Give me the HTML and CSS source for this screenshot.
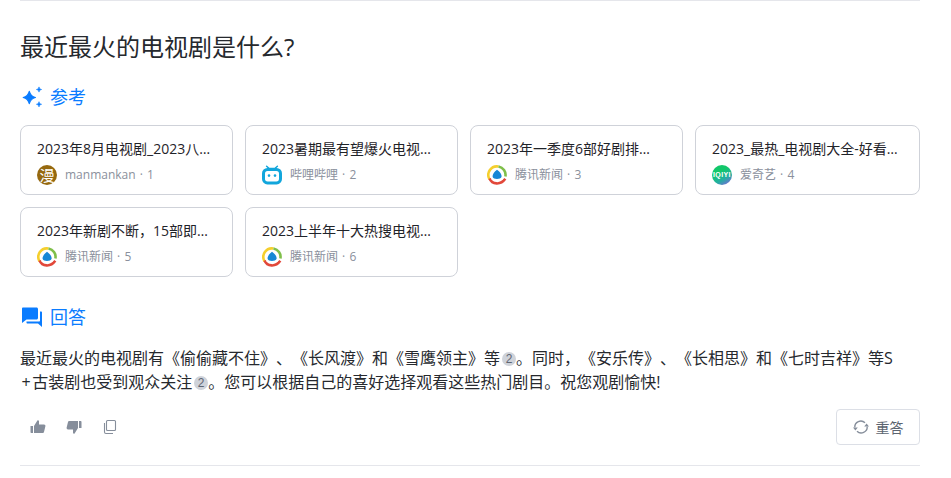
FILE: index.html
```html
<!DOCTYPE html>
<html lang="zh-CN">
<head>
<meta charset="utf-8">
<title>最近最火的电视剧是什么?</title>
<link rel="stylesheet" href="styles.css">
</head>
<body>
<svg class="defs" width="0" height="0" aria-hidden="true">
  <symbol id="tencent" viewBox="0 0 20 20">
    <path d="M2.6 14.4A8.6 8.6 0 0 1 11.5 1.5" fill="none" stroke="#f5cf2e" stroke-width="2.6"/>
    <path d="M11.5 1.5A8.6 8.6 0 0 1 18.4 11.5" fill="none" stroke="#7fbf4a" stroke-width="2.6"/>
    <path d="M2.6 13.5C5 19.5 13.5 20.5 18.3 13.8" fill="none" stroke="#e2483a" stroke-width="2.6"/>
    <path d="M10 4.8C12.7 6.8 15 9.4 14.6 11.8C14.2 13.6 12 14 10 14C8 14 5.8 13.6 5.6 11.8C5.3 9.4 7.4 6.8 10 4.8Z" fill="#1787d6"/>
    <path d="M4.4 14C7.5 15.8 13 15.8 16.2 13.6" fill="none" stroke="#fff" stroke-width="1"/>
  </symbol>
</svg>
<main class="page">
  <h1 class="question">最近最火的电视剧是什么?</h1>

  <h2 class="section-head refs-head">
    <svg class="head-icon" viewBox="0 0 22 22"><path transform="translate(.8 .7)" d="M8.5 4.6C9.4 8.2 10.9 9.7 14.6 10.8C10.9 11.9 9.4 13.4 8.5 17C7.6 13.4 6.1 11.9 2.4 10.8C6.1 9.7 7.6 8.2 8.5 4.6Z" fill="#0a7cff" stroke="#0a7cff" stroke-width="1.2" stroke-linejoin="round"/><path transform="translate(2 .3)" d="M17 .6C17.4 2.2 18 2.8 19.6 3.2C18 3.6 17.4 4.2 17 5.8C16.6 4.2 16 3.6 14.4 3.2C16 2.8 16.6 2.2 17 .6ZM17 15.4C17.4 17 18 17.6 19.6 18C18 18.4 17.4 19 17 20.6C16.6 19 16 18.4 14.4 18C16 17.6 16.6 17 17 15.4Z" fill="#0a7cff" stroke="#0a7cff" stroke-width=".6" stroke-linejoin="round"/></svg>
    <span>参考</span>
  </h2>

  <div class="refs">
    <a class="card">
      <div class="card-title">2023年8月电视剧_2023八月电视剧大全</div>
      <div class="card-meta"><span class="avatar avatar-man">漫</span><span>manmankan · 1</span></div>
    </a>
    <a class="card">
      <div class="card-title">2023暑期最有望爆火电视剧盘点推荐合集</div>
      <div class="card-meta">
        <svg class="avatar" viewBox="0 0 20 20"><path d="M4.6 1.2L7.2 3.6H12.8L15.4 1.2" fill="none" stroke="#12a6dc" stroke-width="1.5" stroke-linecap="round"/><rect x="0" y="3" width="20" height="16.4" rx="5.4" fill="#12a6dc"/><rect x="3" y="6" width="14" height="10.4" rx="2.6" fill="#fff"/><circle cx="7" cy="10.6" r="1.3" fill="#12a6dc"/><circle cx="13" cy="10.6" r="1.3" fill="#12a6dc"/></svg>
        <span>哔哩哔哩 · 2</span>
      </div>
    </a>
    <a class="card">
      <div class="card-title">2023年一季度6部好剧排行榜单新鲜出炉啦</div>
      <div class="card-meta"><svg class="avatar"><use href="#tencent"/></svg><span>腾讯新闻 · 3</span></div>
    </a>
    <a class="card">
      <div class="card-title">2023_最热_电视剧大全-好看的电视剧排行榜</div>
      <div class="card-meta"><span class="avatar avatar-iqiyi">IQIYI</span><span>爱奇艺 · 4</span></div>
    </a>
    <a class="card">
      <div class="card-title">2023年新剧不断&#65292;15部即将开播的电视剧</div>
      <div class="card-meta"><svg class="avatar"><use href="#tencent"/></svg><span>腾讯新闻 · 5</span></div>
    </a>
    <a class="card">
      <div class="card-title">2023上半年十大热搜电视剧名单公布了</div>
      <div class="card-meta"><svg class="avatar"><use href="#tencent"/></svg><span>腾讯新闻 · 6</span></div>
    </a>
  </div>

  <h2 class="section-head answer-head">
    <svg class="head-icon" viewBox="-1 0 22 22"><path d="M2 1.5H15.5C16.3 1.5 17 2.2 17 3V12C17 12.8 16.3 13.5 15.5 13.5H5.5L1 17V2.5C1 2 1.5 1.5 2 1.5Z" fill="#0a7cff"/><path d="M19 5.5H20C20.6 5.5 21 5.9 21 6.5V21L17 17.5H6.5C5.9 17.5 5.5 17.1 5.5 16.5V15.5H18C18.6 15.5 19 15.1 19 14.5Z" fill="#0a7cff"/></svg>
    <span>回答</span>
  </h2>

  <p class="answer">最近最火的电视剧有《偷偷藏不住》、《长风渡》和《雪鹰领主》等<span class="cite">2</span>。同时&#65292;《安乐传》、《长相思》和《七时吉祥》等S<br><span class="plus">+</span>古装剧也受到观众关注<span class="cite">2</span>。您可以根据自己的喜好选择观看这些热门剧目。祝您观剧愉快!</p>

  <div class="actions">
    <div class="action-icons">
      <svg class="action-icon" viewBox="0 0 16 16"><path d="M.5 7H3V14H1.5C.9 14 .5 13.6 .5 13ZM4 7L7.4 1.6C7.8 1 8.9 1.2 9 2.2V5.6H14C15 5.6 15.6 6.4 15.4 7.2L14 13C13.8 13.7 13.2 14 12.6 14H4Z" fill="#868e9b"/></svg>
      <svg class="action-icon" viewBox="0 0 16 16"><path d="M15.5 9H13V2H14.5C15.1 2 15.5 2.4 15.5 3ZM12 9L8.6 14.4C8.2 15 7.1 14.8 7 13.8V10.4H2C1 10.4 .4 9.6 .6 8.8L2 3C2.2 2.3 2.8 2 3.4 2H12Z" fill="#868e9b"/></svg>
      <svg class="action-icon" viewBox="0 0 16 16"><path d="M5.5 1.5H12.5C13 1.5 13.5 2 13.5 2.5V10.5C13.5 11 13 11.5 12.5 11.5H5.5C5 11.5 4.5 11 4.5 10.5V2.5C4.5 2 5 1.5 5.5 1.5Z" fill="none" stroke="#868e9b" stroke-width="1.1"/><path d="M2.5 4V13C2.5 13.8 3.2 14.5 4 14.5H11" fill="none" stroke="#868e9b" stroke-width="1.1"/></svg>
    </div>
    <button class="retry" type="button">
      <svg class="retry-icon" viewBox="0 0 16 16"><path d="M1.8 8.4A6 6 0 0 1 12 3.8" fill="none" stroke="#868e9b" stroke-width="1.4"/><path d="M14.2 7.6A6 6 0 0 1 4 12.2" fill="none" stroke="#868e9b" stroke-width="1.4"/><path d="M16 7.4H11.2L13.6 4.4ZM0 8.6H4.8L2.4 11.6Z" fill="#868e9b"/></svg>
      <span>重答</span>
    </button>
  </div>
</main>
</body>
</html>
```
FILE: styles.css
```css
* { box-sizing: border-box; }
html, body { margin: 0; padding: 0; background: #fff; }
body {
  font-family: "Open Sans", "Noto Sans CJK SC", sans-serif;
  color: #1f2329;
  overflow: hidden;
  text-spacing-trim: space-all;
  font-feature-settings: "palt" 0, "chws" 0;
}
.defs { position: absolute; }
.page {
  width: 900px;
  margin-left: 20px;
  height: 466px;
  border-top: 1px solid #e5e6eb;
  border-bottom: 1px solid #e5e6eb;
}
.question {
  margin: 29px 0 0;
  font-size: 24px;
  line-height: 34px;
  font-weight: 400;
  color: #26292e;
}
.section-head {
  margin: 0;
  display: flex;
  align-items: center;
  gap: 8px;
  font-size: 18px;
  line-height: 26px;
  font-weight: 400;
  color: #0a7cff;
}
.refs-head { margin-top: 20px; }
.answer-head { margin-top: 27px; }
.head-icon { width: 22px; height: 22px; flex: none; }
.refs {
  margin-top: 15px;
  display: grid;
  grid-template-columns: 213px 213px 213px 225px;
  grid-auto-rows: 70px;
  gap: 12px;
}
.card {
  border: 1px solid #cfd2d9;
  border-radius: 8px;
  padding: 13px 19px 0 16px;
  min-width: 0;
}
.card-title {
  font-size: 14px;
  line-height: 20px;
  color: #1f2329;
  white-space: nowrap;
  overflow: hidden;
  text-overflow: ellipsis;
}
.card-meta {
  margin-top: 6px;
  display: flex;
  align-items: center;
  gap: 8px;
  font-size: 12px;
  line-height: 20px;
  word-spacing: 1px;
  color: #8a909c;
}
.avatar { width: 20px; height: 20px; flex: none; display: block; }
.avatar-man {
  border-radius: 50%;
  background: #96690f;
  color: #fff;
  font-size: 15px;
  line-height: 20px;
  text-align: center;
}
.avatar-iqiyi {
  border-radius: 50%;
  background: linear-gradient(150deg, #12c76a 35%, #22b0a0 65%, #8f58e8 100%);
  color: #fff;
  font-family: "Liberation Sans", sans-serif;
  font-size: 7px;
  font-weight: 700;
  letter-spacing: .4px;
  line-height: 20px;
  text-align: center;
  white-space: nowrap;
}
.answer {
  margin: 16px 0 0;
  font-size: 16px;
  line-height: 24px;
  color: #26292e;
}
.plus { padding: 0 1.5px; }
.cite {
  display: inline-block;
  width: 14px;
  height: 14px;
  margin-left: 2px;
  border-radius: 50%;
  background: #cfd3da;
  color: #5f6672;
  font-family: "Liberation Sans", sans-serif;
  font-size: 12px;
  line-height: 14px;
  text-align: center;
  vertical-align: 1px;
}
.actions {
  margin-top: 15px;
  display: flex;
  justify-content: space-between;
  align-items: center;
}
.action-icons { display: flex; gap: 20px; padding-left: 10px; }
.action-icon { width: 16px; height: 16px; display: block; }
.retry {
  width: 84px;
  height: 36px;
  display: flex;
  align-items: center;
  justify-content: center;
  gap: 7px;
  padding: 0;
  background: #fff;
  border: 1px solid #dcdfe6;
  border-radius: 4px;
  font: inherit;
  font-size: 14px;
  color: #5c6470;
}
.retry-icon { width: 16px; height: 16px; }
```
